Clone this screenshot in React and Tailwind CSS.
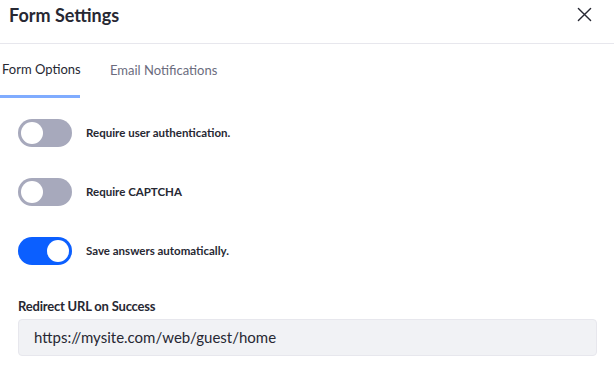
import React from "react";

function Toggle({ on, label }) {
  return (
    <div className="flex items-center h-[28px]">
      <div
        className={`relative w-[54px] h-[28px] rounded-full shrink-0 ${on ? "bg-[#0b5fff]" : "bg-[#a7a9bc]"}`}
      >
        <div
          className={`absolute top-[3px] w-[22px] h-[22px] rounded-full bg-white ${on ? "left-[29px]" : "left-[3px]"}`}
        />
      </div>
      <span className="ml-[14px] text-[11.5px] font-bold text-[#272833]">{label}</span>
    </div>
  );
}

export default function App() {
  return (
    <div
      className="w-[614px] h-[375px] bg-white overflow-hidden"
      style={{ fontFamily: "Lato, 'Noto Sans', sans-serif" }}
    >
      <div className="h-[44px] border-b border-[#e7e7ed] flex items-center justify-between pl-[9px] pr-[22px]">
        <h1 className="text-[18px] font-bold text-[#272833] leading-none -mt-[13px]">Form Settings</h1>
        <svg width="15" height="15" viewBox="0 0 16 16" className="-mt-[14px]">
          <path d="M1.5 1.5 L14.5 14.5 M14.5 1.5 L1.5 14.5" stroke="#272833" strokeWidth="1.5" strokeLinecap="round" />
        </svg>
      </div>
      <div className="flex h-[54px]">
        <div className="w-[80px] flex flex-col shrink-0">
          <div className="flex-1 flex items-center pl-[2px] text-[13px] text-[#272833] whitespace-nowrap">Form Options</div>
          <div className="h-[3px] bg-[#80acff]" />
        </div>
        <div className="flex-1 flex flex-col">
          <div className="flex-1 flex items-center pl-[30px] text-[13px] text-[#6b6c7e] whitespace-nowrap">Email Notifications</div>
        </div>
      </div>
      <div className="pl-[18px] pt-[21px] flex flex-col gap-[31px]">
        <Toggle label="Require user authentication." />
        <Toggle label="Require CAPTCHA" />
        <Toggle on label="Save answers automatically." />
      </div>
      <div className="px-[18px] pr-[17px] mt-[32px]">
        <div className="text-[13px] font-bold text-[#272833] mb-[4px] tracking-[-0.2px] leading-[18px]">Redirect URL on Success</div>
        <div className="h-[37px] rounded-[4px] border border-[#e7e7ed] bg-[#f1f2f5] flex items-center pl-[15px] text-[15px] text-[#272833]">
          https://mysite.com/web/guest/home
        </div>
      </div>
    </div>
  );
}
